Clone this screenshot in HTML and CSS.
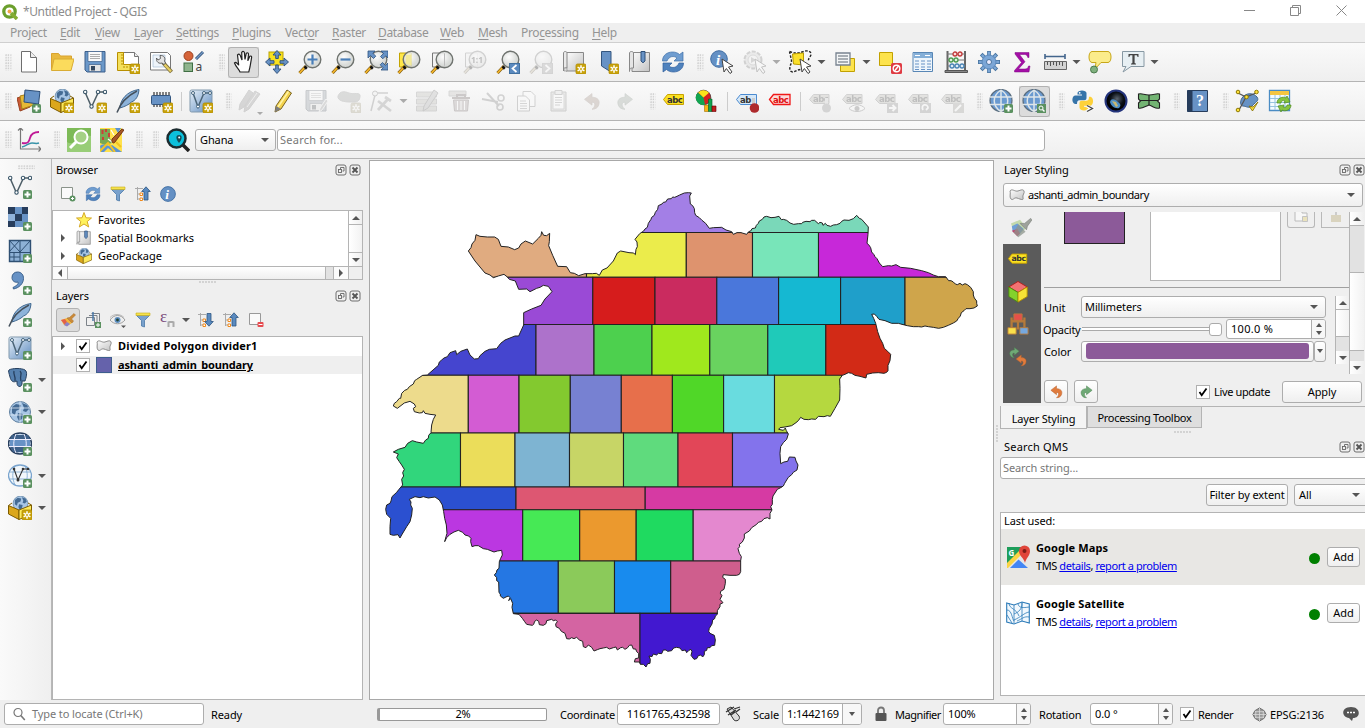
FILE: index.html
```html
<!DOCTYPE html>
<html lang="en">
<head>
<meta charset="utf-8">
<title>*Untitled Project - QGIS</title>
<link rel="stylesheet" href="styles.css">
</head>
<body>
<svg class="defs" aria-hidden="true">
<defs>
<linearGradient id="blueG" x1="0" y1="0" x2="1" y2="1"><stop offset="0" stop-color="#e8f1f9"/><stop offset="1" stop-color="#5f8cc0"/></linearGradient>
<linearGradient id="grayG" x1="0" y1="0" x2="1" y2="1"><stop offset="0" stop-color="#fdfdfd"/><stop offset="1" stop-color="#c3c3c3"/></linearGradient>
<radialGradient id="lensG" cx=".4" cy=".35"><stop offset="0" stop-color="#fff"/><stop offset="1" stop-color="#d3d6d3"/></radialGradient>
<radialGradient id="earthG" cx=".55" cy=".4"><stop offset="0" stop-color="#5b6570"/><stop offset=".6" stop-color="#0b1017"/><stop offset="1" stop-color="#000"/></radialGradient>

<symbol id="b-star" viewBox="0 0 24 24"><rect x="14" y="14" width="10" height="10" rx="1.500" fill="#c9a30a" stroke="#b08a00" stroke-width=".8"/><path d="M19 15.200v7.600M15.600 17.100l6.800 3.800M22.400 17.100l-6.800 3.800" stroke="#fff" stroke-width="1.500"/><circle cx="19" cy="19" r="1" fill="#c9a30a"/></symbol>
<symbol id="b-plus" viewBox="0 0 24 24"><rect x="15" y="15" width="9" height="9" rx="1.500" fill="#5b9160"/><path d="M19.500 16.500v6M16.500 19.500h6" stroke="#fff" stroke-width="2"/></symbol>
<symbol id="lens" viewBox="0 0 24 24"><path d="M1.500 23l6.500-7" stroke="#7c5a10" stroke-width="3"/><path d="M1.500 23l5.200-5.600" stroke="#f4b52a" stroke-width="1.800"/><path d="M6.500 16.500l2.300 2.200" stroke="#111" stroke-width="2.600"/><circle cx="14.500" cy="9.500" r="8.300" fill="url(#lensG)" fill-opacity=".85" stroke="#6f736f" stroke-width="1.400"/></symbol>

<symbol id="new" viewBox="0 0 24 24"><path d="M4.500 1.500h9l6 6v14.500h-15z" fill="#fff" stroke="#6e6e6e"/><path d="M13.500 1.500v6h6" fill="#eee" stroke="#6e6e6e"/></symbol>
<symbol id="open" viewBox="0 0 24 24"><path d="M1.500 20V3.500h7l2 2.500h11v3" fill="#e9b93e" stroke="#d9a32f"/><path d="M1.500 20.500L4 9h20l-3 11.500z" fill="#fbdb5c" stroke="#d9ac34"/></symbol>
<symbol id="save" viewBox="0 0 24 24"><path d="M2 1.500h20v20.500H4l-2-2z" fill="#6b98c9" stroke="#3c5f8a"/><path d="M5 1.500h14v10H5z" fill="#fafafa" stroke="#3c5f8a" stroke-width=".7"/><path d="M7 4.500h10M7 6.500h10M7 8.500h10" stroke="#999" stroke-width=".8"/><path d="M6 14.500h12v7H6z" fill="#e4e4e4" stroke="#3c5f8a" stroke-width=".7"/><path d="M8 16h4v4.500H8z" fill="#33475e"/></symbol>
<symbol id="layout" viewBox="0 0 24 24"><path d="M4.500 2.500h14l4 4v14h-18z" fill="#fff" stroke="#777"/><path d="M1.500 2.500h6v12h10v6h-16z" fill="#f4e05c" stroke="#b88f00"/><path d="M5 5h2M5 8h2M5 11h2M5 14h2M8 16v2M11 16v2" stroke="#b88f00"/><path d="M18.500 2.500v4h4" fill="#eee" stroke="#777"/><use href="#b-star"/></symbol>
<symbol id="layoutmgr" viewBox="0 0 24 24"><path d="M1.500 2.500h17l3 3v14.500h-20z" fill="#fff" stroke="#777"/><path d="M4 5h12v12H4z" fill="#eef4fa" stroke="#9bb6d2" stroke-width=".6"/><path d="M14 12.500l8.500 9.500" stroke="#7d7040" stroke-width="4"/><path d="M15.500 14.500l6.500 7" stroke="#e7cf63" stroke-width="2.200"/><path d="M11 5.500l.5 3-2.500 1.500L7.500 8c-.5 4 2.500 6 5.500 5l2 1.500 1.500-1.500-1-2c1.500-3-1-6-4.500-5.500z" fill="#e4e4e4" stroke="#555" stroke-width=".9"/></symbol>
<symbol id="style" viewBox="0 0 24 24"><circle cx="6.500" cy="6" r="4.500" fill="#d5643a" stroke="#9e401e"/><path d="M21 2l-7 7" stroke="#34547b" stroke-width="3"/><path d="M21 2l-7 7" stroke="#7299c6" stroke-width="1.300"/><rect x="2" y="13" width="8.500" height="8.500" fill="#8fb48d" stroke="#3f6e43"/><text x="13.500" y="21" class="i-a">a</text></symbol>
<symbol id="hand" viewBox="0 0 24 24"><path d="M8 22c-1-3-4-5-5.500-9 1.500-1.500 3 .5 4.200 2.200L5.500 5c1.500-1.600 2.400-.6 2.900.8L10 10 9.700 2.300c1.400-1.500 2.400-.7 2.700.4L13 9.500l1.300-6.300c1.400-1 2.200-.1 2.200 1l-.7 6.600 2-4.600c1.300-.6 2 .2 1.800 1.500L18 17l-1.200 5z" fill="#fff" stroke="#222" stroke-width="1.200"/></symbol>
<symbol id="pansel" viewBox="0 0 24 24"><rect x="4" y="2" width="14" height="13" fill="#f9e21e" stroke="#b9a100"/><path d="M12 .5l4 4.500h-2.700v3.500h-2.600V5H8zM12 23.500l-4-4.500h2.700v-4h2.600v4H16zM.5 12L5 8v2.700h4v2.600H5V16zM23.500 12L19 8v2.700h-4v2.600h4V16z" fill="#6792c5" stroke="#2d4f78" stroke-width=".9"/></symbol>
<symbol id="zoomin" viewBox="0 0 24 24"><use href="#lens"/><path d="M14.500 4.500v10M9.500 9.500h10" stroke="#4a7fb8" stroke-width="2.200"/></symbol>
<symbol id="zoomout" viewBox="0 0 24 24"><use href="#lens"/><path d="M9.500 9.500h10" stroke="#4a7fb8" stroke-width="2.200"/></symbol>
<symbol id="zoomfull" viewBox="0 0 24 24"><use href="#lens"/><path d="M4 1h7L8.800 3.200l3 3-2.300 2.300-3-3L4 8zM24 1v7l-2.200-2.200-3 3-2.300-2.300 3-3L17 1zM24 20h-7l2.200-2.200-3-3 2.300-2.300 3 3L24 13z" fill="#6792c5" stroke="#2f5380" stroke-width=".8"/></symbol>
<symbol id="zoomsel" viewBox="0 0 24 24"><path d="M2.500 3h12v14h-12z" fill="#ffe748" stroke="#c4a500"/><use href="#lens"/><path d="M9 5c2 0 4-.5 5.500-.5v11L9 14z" fill="#f2ea9a"/></symbol>
<symbol id="zoomlayer" viewBox="0 0 24 24"><path d="M2.500 3h12v14h-12z" fill="#f2f2f2" stroke="#777"/><use href="#lens"/><path d="M14.500 3.500v12" stroke="#bbb"/></symbol>
<symbol id="zoomnative" viewBox="0 0 24 24"><path d="M2.500 3h12v14h-12z" fill="#f2f2f2" stroke="#777"/><use href="#lens"/><text x="8" y="13" class="i-11">1:1</text></symbol>
<symbol id="zoomlast" viewBox="0 0 24 24"><use href="#lens"/><rect x="13.500" y="13.500" width="10" height="10" fill="#5b8abf" stroke="#41709f"/><path d="M20.500 15l-4 3.500 4 3.500" fill="none" stroke="#fff" stroke-width="1.700"/></symbol>
<symbol id="zoomnext" viewBox="0 0 24 24"><use href="#lens"/><rect x="13.500" y="13.500" width="10" height="10" fill="#999" stroke="#888"/><path d="M16.500 15l4 3.500-4 3.500" fill="none" stroke="#fff" stroke-width="1.700"/></symbol>
<symbol id="mapview" viewBox="0 0 24 24"><path d="M4 2.500h17.500V21H4z" fill="url(#grayG)" stroke="#888"/><path d="M1.500 3c0-2 3.500-2 3.500 0v15H3c-1 0-1.500 1-1.500 3z" fill="#e9e9e9" stroke="#888"/><path d="M2 18h3v3H2z" fill="#ddd" stroke="#888" stroke-width=".6"/><use href="#b-star"/></symbol>
<symbol id="bookmark" viewBox="0 0 24 24"><path d="M6.500 1.500h9.500V22l-9.500-6z" fill="#6792c5" stroke="#34567f"/><use href="#b-star"/></symbol>
<symbol id="bookmarks" viewBox="0 0 24 24"><path d="M4 2.500h17.500V21.500H4z" fill="url(#grayG)" stroke="#888"/><path d="M1.500 3c0-2 4-2 4 0v15H3.500c-1 0-2 1-2 3.500z" fill="#e5e5e5" stroke="#888"/><path d="M13 1.500h4V11l-2 1.800L13 11z" fill="#6792c5" stroke="#2d4f78"/></symbol>
<symbol id="refresh" viewBox="0 0 24 24"><path d="M1.500 11c0-6 5-9 10-9 3 0 5.500 1 7 2.500L22 2v9h-9l3-3c-3-2.500-8-2-10 3z" fill="#6f9dd0" stroke="#3e6ea8" stroke-width=".7"/><path d="M22.500 13c0 6-5 9-10 9-3 0-5.500-1-7-2.500L2 22v-9h9l-3 3c3 2.500 8 2 10-3z" fill="#4f82bd" stroke="#2f5f9c" stroke-width=".7"/></symbol>
<symbol id="cursor" viewBox="0 0 24 24"><path d="M12 9l11 7-4.500 1 3.500 5-2 1.500-3.600-5-2.400 3.500z" fill="#fff" stroke="#444" stroke-width="1"/></symbol>
<symbol id="info" viewBox="0 0 24 24"><circle cx="9" cy="9" r="8.300" fill="#6490c4" stroke="#3f6da3"/><text x="6" y="14.500" class="i-i">i</text></symbol>
<symbol id="identify" viewBox="0 0 24 24"><use href="#info"/><use href="#cursor"/></symbol>
<symbol id="action" viewBox="0 0 24 24"><circle cx="10" cy="10" r="8.500" fill="#ccc" stroke="#777" stroke-width="2" stroke-dasharray="4 1.500"/><circle cx="10" cy="10" r="5" fill="#eee" stroke="#999"/><path d="M8 7l5 3-5 3z" fill="#888"/><use href="#cursor"/></symbol>
<symbol id="select" viewBox="0 0 24 24"><path d="M1.500 1.500c5 2 8 2 14 0 4-1.500 8 0 7.500 3s-3 3-2.500 7M1.500 1.500l2 9c0 4-3 7-1 10.500 3 3 6-2 11-1.500" fill="none" stroke="#222" stroke-width="1.400" stroke-dasharray="2.500 1.500"/><path d="M4.500 4l11-1v12l-10-1z" fill="#fbe02a" stroke="#b99a00"/><use href="#cursor"/></symbol>
<symbol id="selval" viewBox="0 0 24 24"><path d="M7.500 8.500h14v13h-14z" fill="#fde34d" stroke="#c2a100"/><path d="M3 3h14v12H3z" fill="#f4f6f7" stroke="#788390" stroke-width="1.300"/><path d="M5 6h10M5 9h10M5 12h10" stroke="#8e979f" stroke-width="1.300"/></symbol>
<symbol id="desel" viewBox="0 0 24 24"><path d="M1.500 2.500h13v13h-13z" fill="#fde34d" stroke="#c2a100"/><rect x="13" y="13" width="11" height="11" rx="1.500" fill="#df3b43"/><circle cx="18.500" cy="18.500" r="3.300" fill="none" stroke="#fff" stroke-width="1.400"/><path d="M16.500 21l4-5" stroke="#fff" stroke-width="1.400"/></symbol>
<symbol id="table" viewBox="0 0 24 24"><path d="M2 2.500h19.500v19H2z" fill="#eef5fb" stroke="#5886b5"/><path d="M2.500 3h18.500v5H2.500z" fill="#84afd8"/><path d="M4 5.500h5M14 5.500h5" stroke="#fff"/><path d="M4 11h4M10 11h4M16 11h4M4 14h4M10 14h4M16 14h4M4 17h4M10 17h4M16 17h4M4 19.500h4M10 19.500h4M16 19.500h4" stroke="#6792c5"/></symbol>
<symbol id="abacus" viewBox="0 0 24 24"><path d="M3.500 1v19M21 1v19" stroke="#666" stroke-width="2"/><path d="M1 20.500h22.500v2H1z" fill="#888" stroke="#555"/><path d="M3 4h18M3 10h18M3 16h18" stroke="#777"/><g stroke-width="1.300"><g fill="#f9dcdc" stroke="#c23b3b"><circle cx="11" cy="4" r="2"/><circle cx="16" cy="4" r="2"/></g><g fill="#def1de" stroke="#4c9a50"><circle cx="7" cy="10" r="2"/><circle cx="12" cy="10" r="2"/></g><g fill="#deebf5" stroke="#4a84b5"><circle cx="8" cy="16" r="2"/><circle cx="13" cy="16" r="2"/><circle cx="18" cy="16" r="2"/></g></g></symbol>
<symbol id="gear" viewBox="0 0 24 24"><path d="M12 1v22M1 12h22M4.200 4.200l15.600 15.600M19.800 4.200L4.200 19.800" stroke="#48749f" stroke-width="3.800"/><path d="M12 1.800v20.400M1.800 12h20.400M4.800 4.800l14.400 14.400M19.200 4.800L4.800 19.200" stroke="#7ba6d6" stroke-width="2.400"/><circle cx="12" cy="12" r="7" fill="#7ba6d6" stroke="#5c89bb"/><circle cx="12" cy="12" r="2.500" fill="#eef" stroke="#48749f"/></symbol>
<symbol id="sigma" viewBox="0 0 24 24"><path d="M5 2.500h14v5h-1.200c-.5-2-1.500-3-3-3H9.500l5.500 7.300-6.500 7.200H15c2 0 3-.8 3.500-3H20l-1 6H4.500v-1.500l7-8L5 4z" fill="#a40ea6" stroke="#7d0880" stroke-width=".5"/></symbol>
<symbol id="measure" viewBox="0 0 24 24"><path d="M2 6.500h20M2 4v5M22 4v5" stroke="#43658c" stroke-width="1.600"/><path d="M1.500 11.500h22v8h-22z" fill="#d3d3d3" stroke="#666"/><path d="M4.500 12v3M7.500 12v4M10.500 12v3M13.500 12v4M16.500 12v3M19.500 12v4" stroke="#555"/></symbol>
<symbol id="tips" viewBox="0 0 24 24"><path d="M4 1.500h16c4 0 4 11 0 11h-7L7 19l1-6.500H4c-4 0-4-11 0-11z" fill="#fbec8b" stroke="#c8a718"/><circle cx="6" cy="19.500" r="3.500" fill="#7fb07e" stroke="#4b7a4c"/></symbol>
<symbol id="textann" viewBox="0 0 24 24"><path d="M1.500 1.500h21.500v15H10L2 22l3-5.500H1.500z" fill="#e7eff3" stroke="#8798a3"/><path d="M7.500 4h10v3h-1c0-1.300-.5-1.700-2-1.700h-.9V12.500c0 .8.500 1 1.400 1v1h-5v-1c1 0 1.400-.2 1.400-1V5.300h-.9C9 5.300 8.500 5.700 8.500 7h-1z" fill="#444"/></symbol>

<symbol id="dsm" viewBox="0 0 24 24"><path d="M0 9l11-3 2 12-10 4z" fill="#cc5a35" stroke="#99401f"/><path d="M3 7l12-3 2 12-12 4z" fill="#e6b836" stroke="#a88116"/><path d="M8 1l15 1.500L21.500 15 7 13z" fill="#6792c5" stroke="#2d4f78"/><use href="#b-plus"/></symbol>
<symbol id="globe" viewBox="0 0 24 24"><circle cx="12" cy="12" r="10.500" fill="#a8c6e5" stroke="#5e7f9f"/><path d="M4 7l4-3 5 1-1 4-4 2-1 4-3-2zM14 3l5 2 2 4-3 3-3-1 1-3zM10 13l5 1-1 5-3 2-2-4z" fill="#446b94"/></symbol>
<symbol id="gpkg" viewBox="0 0 24 24"><svg x="4" y="-1" width="17" height="17" viewBox="0 0 24 24"><use href="#globe"/></svg><path d="M.5 9.500L11 14v9.500L.5 18z" fill="#dba71c" stroke="#7d5c00"/><path d="M11 14l12.500-5v9L11 23.500z" fill="#fce95c" stroke="#7d5c00"/><path d="M.5 9.500L4 7M23.500 9L20 7" stroke="#7d5c00"/></symbol>
<symbol id="newgpkg" viewBox="0 0 24 24"><use href="#gpkg"/><use href="#b-star"/></symbol>
<symbol id="vee" viewBox="0 0 24 24"><path d="M2 3l6.500 15 7-15h6" fill="none" stroke="#4d5d66" stroke-width="1.500"/><g fill="#fff" stroke="#3c586b" stroke-width="1.100"><circle cx="2.200" cy="3" r="1.700"/><circle cx="8.500" cy="17.500" r="1.700"/><circle cx="15" cy="3" r="1.700"/><circle cx="22" cy="3" r="1.700"/></g></symbol>
<symbol id="newshp" viewBox="0 0 24 24"><use href="#vee"/><use href="#b-star"/></symbol>
<symbol id="feather" viewBox="0 0 24 24"><path d="M4 19C4 11 11 2 23 .5c-.5 7-3.500 11-7.500 12.500-3 3-7 4.500-11.500 6z" fill="#8db3da" stroke="#3f678f"/><path d="M1 23.500C4 15 11 7 21 2" fill="none" stroke="#44505c" stroke-width="1.500"/></symbol>
<symbol id="newlite" viewBox="0 0 24 24"><use href="#feather"/><use href="#b-star"/></symbol>
<symbol id="mem" viewBox="0 0 24 24"><path d="M5 3v15M8 3v15M11 3v15M14 3v15M17 3v15M20 3v15" stroke="#333" stroke-width="1.200"/><rect x="2.500" y="6.500" width="19" height="9" rx="1" fill="#6792c5" stroke="#34567f"/><use href="#b-star"/></symbol>
<symbol id="virt" viewBox="0 0 24 24"><rect x="1" y="1" width="22" height="22" rx="1.500" fill="url(#blueG)" stroke="#8199ad"/><path d="M4 4l5 14L15 4h5" fill="none" stroke="#4c6578" stroke-width="1.500"/><g fill="#fff" stroke="#45667f"><circle cx="4" cy="4" r="1.500"/><circle cx="9" cy="17.500" r="1.500"/><circle cx="15" cy="4" r="1.500"/><circle cx="21" cy="4" r="1.500"/></g></symbol>
<symbol id="newvirt" viewBox="0 0 24 24"><use href="#virt"/><use href="#b-star"/></symbol>
<symbol id="addvirt" viewBox="0 0 24 24"><use href="#virt"/><use href="#b-plus"/></symbol>
<symbol id="pencil" viewBox="0 0 24 24"><path d="M4 23l1-6L16 1l4.500 3L10 20z" fill="#f3d24c" stroke="#7b6420"/><path d="M7 18L17.500 2.500" stroke="#fff3a5" stroke-width="1.500"/><path d="M4 23l1-6 5 3z" fill="#7d7d7d"/></symbol>
<symbol id="pencils" viewBox="0 0 24 24"><path d="M1 21l1-6L11 1l4 3-9 14zM6 23l1-6L17 2l5 3-11 15z" fill="#8f8987" stroke="#777"/><path d="M9 18L19 4" stroke="#ddd"/></symbol>
<symbol id="savee" viewBox="0 0 24 24"><use href="#save"/><path d="M15 23l1-4 6-9 2 2-6 9z" fill="#999" stroke="#eee"/></symbol>
<symbol id="digit" viewBox="0 0 24 24"><path d="M1 7c2-5 6-5 11-3s12-2 11 4-5 5-10 5S0 12 1 7z" fill="#8c9c8a" stroke="#888"/><use href="#b-star"/></symbol>
<symbol id="vertex" viewBox="0 0 24 24"><path d="M1 22L5 6M5 4h13" stroke="#777" stroke-width="1.500"/><circle cx="5" cy="4.500" r="2.500" fill="#eee" stroke="#666"/><path d="M8 21L18 10M8 12l13 10M15 8l6 4" stroke="#888" stroke-width="2.800"/></symbol>
<symbol id="multi" viewBox="0 0 24 24"><path d="M1.500 3h20v5h-20zM1.500 10h20v5h-20zM1.500 17h20v5h-20z" fill="#bbb591" stroke="#888"/><path d="M8 22l1-5L19 1l4 3-10 15z" fill="#aaa" stroke="#666"/></symbol>
<symbol id="trash" viewBox="0 0 24 24"><path d="M1 2h17v5H1z" fill="#c4b99d" stroke="#888"/><path d="M4 9h18M9 8V6h8v2" stroke="#86504a" stroke-width="2" fill="none"/><path d="M5.500 11h15l-1 11h-13z" fill="#bb8f8c" stroke="#86504a"/><path d="M9.500 12v9M13 12v9M16.500 12v9" stroke="#fff"/></symbol>
<symbol id="cut" viewBox="0 0 24 24"><path d="M1 10l16 3M6 4l12 13" stroke="#777" stroke-width="2"/><circle cx="20" cy="9" r="3" fill="none" stroke="#777" stroke-width="1.600"/><circle cx="19" cy="18" r="3" fill="none" stroke="#777" stroke-width="1.600"/></symbol>
<symbol id="copy" viewBox="0 0 24 24"><path d="M9 2.500h8l4 4v11H9z" fill="#fff" stroke="#777"/><path d="M3.500 7h8l4 4v11h-12z" fill="#fff" stroke="#777"/><path d="M6 12h6M6 14.500h7M6 17h7M6 19.500h7" stroke="#888"/></symbol>
<symbol id="paste" viewBox="0 0 24 24"><path d="M4 3h15v19H4z" fill="#c9c9bd" stroke="#777"/><path d="M6 5h11v15H6z" fill="#fff" stroke="#999"/><path d="M8 1.500h7v4H8z" fill="#ddd" stroke="#777"/><path d="M8 8.500h7M8 11h7M8 13.500h7M8 16h5" stroke="#888"/></symbol>
<symbol id="undo" viewBox="0 0 24 24"><path d="M3 10l9-7v4.500c7 0 10 4 8 9.500-1 3-4 5-8 5 5-4 4-9 0-8.500V17z" fill="#e07b3d" stroke="#b9622d" stroke-width=".8"/></symbol>
<symbol id="redo" viewBox="0 0 24 24"><path d="M21 10l-9-7v4.500c-7 0-10 4-8 9.500 1 3 4 5 8 5-5-4-4-9 0-8.500V17z" fill="#6fa976" stroke="#4c8453" stroke-width=".8"/></symbol>
<symbol id="label" viewBox="0 0 24 24"><path d="M1.500 10.500l4-5h16v10h-16z" fill="#fbe122" stroke="#c7a100"/><text x="5" y="13.500" class="i-abc">abc</text></symbol>
<symbol id="labelb" viewBox="0 0 24 24"><path d="M1.500 10.500l4-5h16v10h-16z" fill="#d4e7f8" stroke="#4a8ad0"/><text x="5" y="13.500" class="i-abc">ab</text><path d="M18.500 9v9" stroke="#ccc" stroke-width="3"/><circle cx="19.500" cy="19" r="4.800" fill="#ae2a2d"/></symbol>
<symbol id="labelr" viewBox="0 0 24 24"><path d="M1.500 10.500l4-5h16.500v10h-16.500z" fill="#fbdada" stroke="#f01818" stroke-width="1.300"/><text x="5" y="13.500" class="i-abc i-red">abc</text></symbol>
<symbol id="labelg" viewBox="0 0 24 24"><path d="M1.500 10.500l4-5h15.500v9h-15.500z" fill="#b8b48e" stroke="#777"/><text x="5" y="13" class="i-abc">abc</text></symbol>
<symbol id="l-pin" viewBox="0 0 24 24"><use href="#labelg"/><path d="M18.500 9v8" stroke="#ccc" stroke-width="3"/><circle cx="18.500" cy="19" r="4.500" fill="#888"/></symbol>
<symbol id="l-eye" viewBox="0 0 24 24"><use href="#labelg"/><path d="M8 19.500c4-5 12-5 16 0-4 4-12 4-16 0z" fill="#fff" stroke="#666"/><circle cx="16" cy="19.500" r="2.500" fill="#666"/></symbol>
<symbol id="l-move" viewBox="0 0 24 24"><use href="#labelg"/><rect x="13" y="14" width="11" height="10" fill="#888"/><path d="M15 19h6M18.500 16l3 3-3 3" stroke="#fff" stroke-width="2" fill="none"/></symbol>
<symbol id="l-rot" viewBox="0 0 24 24"><use href="#labelg"/><rect x="13" y="14" width="11" height="10" fill="#888"/><path d="M16 21c-3-6 5-7 5-2l-2 2" stroke="#fff" stroke-width="1.800" fill="none"/></symbol>
<symbol id="l-edit" viewBox="0 0 24 24"><use href="#labelg"/><rect x="13" y="14" width="11" height="10" fill="#9b977c"/><path d="M15 22l6-6" stroke="#fff" stroke-width="2.200"/></symbol>
<symbol id="diag" viewBox="0 0 24 24"><circle cx="8.500" cy="8.500" r="7.300" fill="#d81f1f" stroke="#333" stroke-width=".7"/><path d="M8.500 8.500L3 3.500A7.300 7.300 0 0 0 10 15.700z" fill="#12a551"/><path d="M8.500 8.500L3.200 3.500A7.300 7.300 0 0 1 14 3.700z" fill="#fce21a"/><path d="M9.500 16h4v6.500h-4z" fill="#f9b516" stroke="#a07000" stroke-width=".6"/><path d="M13.500 10h3.500v12.500h-3.500z" fill="#12a551" stroke="#045a26" stroke-width=".6"/><path d="M17 17h4v5.500h-4z" fill="#c01f1f" stroke="#600" stroke-width=".6"/></symbol>
<symbol id="wglobe" viewBox="0 0 24 24"><circle cx="12" cy="11.500" r="11" fill="#6a9ad0" stroke="#5c6f80" stroke-width="1.200"/><path d="M1 8h22M1 15.500h22M12 1v21.500M12 1C3 7 3 17 12 22.500M12 1c9 6 9 16 0 21.500" stroke="#dfe6e9" stroke-width="1.500" fill="none"/></symbol>
<symbol id="wadd" viewBox="0 0 24 24"><use href="#wglobe"/><use href="#b-plus"/></symbol>
<symbol id="wsearch" viewBox="0 0 24 24"><use href="#wglobe"/><rect x="15" y="15" width="9" height="9" fill="#5b9160"/><circle cx="19" cy="19" r="2" fill="none" stroke="#fff"/><path d="M20.500 20.500l2 2" stroke="#fff" stroke-width="1.500"/></symbol>
<symbol id="python" viewBox="0 0 24 24"><path d="M6.500 4c0-3.500 9-3.500 9 0v5c0 1.500-1 2.200-2.200 2.200H8.500C6.500 11.200 6 12.500 6 15H4c-4-1.500-3-8.500.5-8.500H11V5.500H6.500z" fill="#3674a9"/><circle cx="8.700" cy="3.800" r=".9" fill="#fff"/><path d="M17.500 18.500c0 4-9 4-9 0V14c0-1.500 1-2.300 2.300-2.300H15c2 0 3-1 3-4h1.500c4 1.500 3 9-.5 9h-6v1z" fill="#fdd13a"/><path d="M16 17l5 2.500-5 2.500" fill="none" stroke="#fff" stroke-width="3"/><path d="M16 16.500l5.500 3-5.500 3" fill="none" stroke="#444" stroke-width="1.300"/></symbol>
<symbol id="earth" viewBox="0 0 24 24"><circle cx="12" cy="12" r="10.500" fill="url(#earthG)" stroke="#24347c" stroke-width="2"/><path d="M6 13c1-4 5-3 8 0 3 2 3 4 1 6-4 1-8-2-9-6z" fill="#4d8ec4"/><path d="M8 12l4 1 2 4-2 1z" fill="#c7b873"/></symbol>
<symbol id="greenmap" viewBox="0 0 24 24"><path d="M1.500 5c4-1 5 1 10.500 1s7-2 10.500-1v5l-2 2 2 2v5c-4 1-5-1-10.500-3-5 2-7 4-10.500 3v-5l2-2-2-2z" fill="#73b473" stroke="#222" stroke-width="1.100"/><path d="M12 6v10M3 11.500h18" stroke="#222" stroke-width="1.200"/></symbol>
<symbol id="help" viewBox="0 0 24 24"><path d="M1.500 1.500h20v21h-20z" fill="#6792c5" stroke="#273d5c"/><path d="M1.500 1.500h5v21h-5z" fill="#273d5c"/><text x="10" y="17" class="i-q">?</text></symbol>
<symbol id="polyc" viewBox="0 0 24 24"><path d="M7 9c4-6 12-5 15-1s-3 6-5 9c-3 3-6 0-9 0s-3-5-1-8z" fill="#6792c5" stroke="#41668f"/><path d="M3 4l8 4 10-4M11 8L4 21" stroke="#555" fill="none" stroke-width="1.300"/><g fill="#ffe13c" stroke="#8f7b00"><circle cx="3" cy="3" r="1.800"/><circle cx="21.500" cy="3" r="1.800"/><circle cx="11.500" cy="8" r="1.800"/><circle cx="3" cy="21" r="1.800"/></g><path d="M14 17l3.500 5 5.500-9-5 5z" fill="#f7d93b" stroke="#826c00" stroke-width=".8"/></symbol>
<symbol id="tabref" viewBox="0 0 24 24"><path d="M1.500 1.500h20v20h-20z" fill="#f4fbff" stroke="#4b8cc4" stroke-width="1.300"/><path d="M2 2h19v4H2z" fill="#f5c542"/><path d="M2 9.500h19M2 13.500h19M2 17.500h19M7 6v15M12 6v15M17 6v15" stroke="#98c3df"/><path d="M9 14c0-5 6-7 9-5l1-2 3 6-6 1 1-2c-2-1-4 0-4 2zM23 16c0 5-6 7-9 5l-1 2-3-6 6-1-1 2c2 1 4 0 4-2z" fill="#86c440" stroke="#4e8a1b" stroke-width=".7"/></symbol>

<symbol id="chart" viewBox="0 0 24 24"><path d="M3.500 0v21H24M1 2.500l2.500-2.500L6 2.500M21.500 18.500L24 21l-2.500 2.500" stroke="#777" fill="none" stroke-width="1.200"/><path d="M5 15c6 1 7-1 8-5s4-6 9-6" stroke="#c01a96" stroke-width="1.800" fill="none"/><path d="M5 19c5-1 6-4 10-4 3 0 4 1 7 0" stroke="#3893a9" stroke-width="1.500" fill="none"/></symbol>
<symbol id="qms" viewBox="0 0 24 24"><path d="M0 0h24v24H0z" fill="#7dba57"/><path d="M0 14c8 5 14-8 24-6v16H0z" fill="#98cd77"/><circle cx="14" cy="9" r="6.500" fill="#a4d184" stroke="#fff" stroke-width="2"/><path d="M9.500 13.500L3 20" stroke="#fff" stroke-width="3"/></symbol>
<symbol id="osm" viewBox="0 0 24 24"><path d="M0 0h22v24H0z" fill="#ffe14c"/><path d="M0 1h10v9l2 5-7 2-5-2z" fill="#79a954"/><path d="M2.500 2v4M6 1v3M9 5v4M3 9v3" stroke="#cd3e39" stroke-width="2"/><path d="M11 2l3 5M8 11l4 3" stroke="#fff" stroke-width="1.200"/><path d="M15 0h6l-3 5zM0 18c4-4 8 2 12-1l10 7h-9l-5-4-4 4H1z" fill="#5b94d5"/><path d="M0 23L8 15l7 9M16 14l5 5" stroke="#f2c323" stroke-width="2" fill="none"/><path d="M12 11L22 1l2 1-9 12c-1 2-4 1-3-3z" fill="#a75728" stroke="#5e2508" stroke-width=".8"/></symbol>
<symbol id="searchpin" viewBox="0 0 24 24"><path d="M17 17l6 6" stroke="#222" stroke-width="3.500"/><circle cx="10.500" cy="10.500" r="9" fill="#0cc0dc" stroke="#1c2b2f" stroke-width="2.500"/><path d="M13 15c-4-5-3-8 0-8s4 3 0 8z" fill="#164a55"/><circle cx="13.200" cy="9.500" r="1" fill="#fff"/></symbol>

<symbol id="addvec" viewBox="0 0 24 24"><use href="#vee"/><use href="#b-plus"/></symbol>
<symbol id="addras" viewBox="0 0 24 24"><path d="M0 0h20v20H0z" fill="#6792c5"/><path d="M0 0h7v7H0zM14 0h6v7h-6zM7 7h7v7H7zM0 14h7v6H0z" fill="#273d5c"/><path d="M0 7h7v7H0z" fill="#8fb2da"/><use href="#b-plus"/></symbol>
<symbol id="addmesh" viewBox="0 0 24 24"><path d="M1.500 1.500h21v21h-21z" fill="#8db1d6" stroke="#2f5073" stroke-width="1.400"/><path d="M1 13.500h22M12 1v22M1 1l11 12M12 1L1 13M22 2L12 13M6 13v10M12 18H2" stroke="#2f5073" fill="none"/><use href="#b-plus"/></symbol>
<symbol id="adddelim" viewBox="0 0 24 24"><path d="M5 16.500c4-2 6-4 5-5.500-3 1-6-1-6-4.500C4 3 6.500 1 9.500 1c4 0 6 3 6 6.500 0 5-4.500 9.500-10 10.500z" fill="#6792c5" stroke="#3b618d"/><use href="#b-plus"/></symbol>
<symbol id="addlite" viewBox="0 0 24 24"><use href="#feather"/><use href="#b-plus"/></symbol>
<symbol id="addpg" viewBox="0 0 24 24"><path d="M1 2c3-2 13-2 16 0s1 8 0 11h-3v3c-1 4-5 3-5-1v-2c-4 2-6 0-7-4S0 3 1 2z" fill="#5580ae" stroke="#263f5e"/><path d="M6 3c-1 4 2 5 1 10M12 3c3 3-1 5 1 10" stroke="#263f5e" stroke-width="1.300" fill="none"/><use href="#b-plus"/></symbol>
<symbol id="addwms" viewBox="0 0 24 24"><use href="#globe"/><path d="M2 8h20M2 15h20M12 1v22" stroke="#dfeaf5" stroke-width=".8"/><use href="#b-plus"/></symbol>
<symbol id="addxyz" viewBox="0 0 24 24"><ellipse cx="12" cy="11.500" rx="11.500" ry="10.500" fill="#c7dbf0" stroke="#273d5c" stroke-width="1.500"/><path d="M2 8h20v6H2z" fill="#6792c5"/><path d="M4 3h16l2 4H2zM2 15h20l-3 5H5z" fill="#3d5f88"/><path d="M8 2c-3 7-3 13 0 19M16 2c3 7 3 13 0 19M1 7.500h22M1 14.500h22" stroke="#eef" fill="none"/><use href="#b-plus"/></symbol>
<symbol id="addwfs" viewBox="0 0 24 24"><ellipse cx="12" cy="11.500" rx="11.500" ry="10.500" fill="#f2f7fb" stroke="#7aa4ce" stroke-width="1.300"/><path d="M1 8h22M1 15h22M7 2c-3 7-3 12 0 19M17 2c3 7 3 12 0 19" stroke="#7aa4ce" fill="none" stroke-width=".8"/><path d="M6 5l4 11 5-11h5" stroke="#333" fill="none" stroke-width="1.100"/><g fill="#333"><circle cx="6" cy="5" r="1.300"/><circle cx="10" cy="16" r="1.500"/><circle cx="15" cy="5" r="1.300"/><circle cx="20" cy="5" r="1.300"/></g><use href="#b-plus"/></symbol>

<symbol id="s-add" viewBox="0 0 16 16"><path d="M1.500 1.500h11v11h-11z" fill="#fafafa" stroke="#8a938a"/><circle cx="12.500" cy="12.500" r="3" fill="#5b9160"/><path d="M12.500 11v3M11 12.500h3" stroke="#fff"/></symbol>
<symbol id="s-rem" viewBox="0 0 16 16"><path d="M1.500 1.500h11v11h-11z" fill="#fafafa" stroke="#999"/><rect x="9.500" y="10" width="6" height="5" rx="1" fill="#e64a4f"/><path d="M10.500 12.500h4" stroke="#fff"/></symbol>
<symbol id="s-filter" viewBox="0 0 16 16"><path d="M1.500 3.500h13L9.500 8.500V15l-3-1V8.500z" fill="#79a1cc" stroke="#4a78a8" stroke-width=".8"/><path d="M1 1h14v2.500H1z" fill="#f6e24c" stroke="#c8ac16" stroke-width=".6"/></symbol>
<symbol id="s-tree" viewBox="0 0 16 16"><path d="M2.500 1v13M0 2.500h8M2.500 8H6M2.500 13H6" stroke="#aaa"/><path d="M5 7h2.500v2.500H5zM5 12h2.500v2.500H5z" fill="#fff" stroke="#f08a1c"/></symbol>
<symbol id="s-up" viewBox="0 0 16 16"><use href="#s-tree"/><path d="M11 .8l4.300 4.700H13V14H9V5.500H6.700z" fill="#5a8abf" stroke="#2d5582" stroke-width=".8"/></symbol>
<symbol id="s-down" viewBox="0 0 16 16"><use href="#s-tree"/><path d="M11 14.200l4.300-4.700H13V1.500H9v8H6.700z" fill="#5a8abf" stroke="#2d5582" stroke-width=".8"/></symbol>
<symbol id="s-brush" viewBox="0 0 16 16"><path d="M1 8l6-2 5 5-5 3-3-1z" fill="#f2b63d"/><path d="M1 8l4-1 2 3-2 3z" fill="#e2604c"/><path d="M4 13l3-3 3 2-3 2.500z" fill="#8a82c8"/><path d="M7 6l5 5 1.500-2-2-2L15.500 3 14 1.500 9.500 5.500z" fill="#cb8a38" stroke="#a46a22" stroke-width=".5"/></symbol>
<symbol id="s-group" viewBox="0 0 16 16"><path d="M1.500 5.500h8v8h-8zM4 3.500h8v8M6.500 1.500h8v8" fill="none" stroke="#7c8289"/><path d="M8 0v9" stroke="#4a78a8" stroke-width="1.500"/><rect x="10" y="10" width="6" height="6" fill="#5b9160"/><path d="M13 11v4M11 13h4" stroke="#fff"/></symbol>
<symbol id="s-eye" viewBox="0 0 16 16"><path d="M0 8c4-6 11-6 15 0-4 5-11 5-15 0z" fill="#eee" stroke="#8a8a8a" stroke-width=".8"/><circle cx="7.500" cy="8" r="3" fill="#5f8fc2"/><circle cx="7.500" cy="8" r="1.400" fill="#243"/><path d="M0 5.500c4-4 10-4 14 0" fill="none" stroke="#aaa" stroke-width=".8"/><path d="M11 13.500h5l-2.500 2.500z" fill="#555"/></symbol>
<symbol id="s-eps" viewBox="0 0 16 16"><text x="0" y="10" class="i-eps">ε</text><path d="M8.500 9.500v5.500M13.500 9.500v5.500M8.500 10h5" fill="none" stroke="#aaa" stroke-width="2"/></symbol>
<symbol id="star" viewBox="0 0 16 16"><path d="M8 .5l2 5.300 5.500.2-4.300 3.500 1.500 5.500L8 12l-4.700 3 1.500-5.500L.5 6l5.500-.2z" fill="#fff25c" stroke="#d5a928"/></symbol>
<symbol id="poly" viewBox="0 0 16 16"><path d="M1 4c2-3 5 1 8 0s5-2 6 0-2 4-1 7-3 1-6 0-4 3-6 1 0-6-1-8z" fill="url(#grayG)" stroke="#8c8c8c"/></symbol>
<symbol id="brush" viewBox="0 0 24 24"><path d="M1 7l10-4 7 9-9 8-5-5z" fill="#c3d9ac"/><path d="M2 10l6-3 7 6-6 7-6-4z" fill="#6f9fd6"/><path d="M2 15l6-2 3 5-3 3z" fill="#c2456b"/><path d="M9 8l8 8-8 6-5-5z" fill="#8d968d" fill-opacity=".75"/><path d="M11 7l7 7 1-4 5-7-1.500-1.500L16 7z" fill="#9ea29c" stroke="#7b807b" stroke-width=".7"/></symbol>
<symbol id="cube" viewBox="0 0 24 24"><path d="M12 .5l10 6-10 6-10-6z" fill="#f27272" stroke="#b31b1b"/><path d="M2 6.500l10 6V23L2 17z" fill="#84d22c" stroke="#4a8a10"/><path d="M22 6.500l-10 6V23l10-6z" fill="#f6e336" stroke="#b29100"/></symbol>
<symbol id="brushes" viewBox="0 0 24 24"><path d="M12 6v12M5 5v11M19 5v11M5 9h14" stroke="#b57a3a" stroke-width="2.500"/><path d="M7.500 1h9v7h-9z" fill="#e5504a" stroke="#ba7a3d"/><path d="M1 16h9v7H1z" fill="#fae04b" stroke="#b57a3a"/><path d="M14 16h9v7h-9z" fill="#76a8de" stroke="#b57a3a"/></symbol>
<symbol id="history" viewBox="0 0 24 24"><svg x="1" y="1" width="14" height="14" viewBox="0 0 24 24"><use href="#redo"/></svg><svg x="8" y="9" width="15" height="15" viewBox="0 0 24 24"><use href="#undo"/></svg></symbol>
<symbol id="float" viewBox="0 0 12 12"><rect x="1" y="1" width="10" height="10" rx="2" fill="none" stroke="#6e6e6e"/><path d="M5.500 5V3.500h3.500V7H7.500" fill="none" stroke="#666" stroke-width=".9"/><rect x="3.500" y="5.500" width="3" height="3" fill="#efefef" stroke="#666" stroke-width=".9"/></symbol>
<symbol id="closep" viewBox="0 0 12 12"><rect x="1" y="1" width="10" height="10" rx="2" fill="none" stroke="#6e6e6e"/><path d="M3.500 3.500l5 5M8.500 3.500l-5 5" stroke="#555" stroke-width="1.900"/></symbol>
</defs>
</svg>

<div class="app">
<header class="title">
  <svg class="logo" viewBox="0 0 16 16"><circle cx="7.500" cy="7.500" r="5.700" fill="none" stroke="#6b9f2c" stroke-width="3.300"/><circle cx="7.500" cy="7.500" r="2" fill="#f0a445"/><path d="M9 9l6 6" stroke="#84ac31" stroke-width="3.500"/></svg>
  <span class="cap">*Untitled Project - QGIS</span>
  <div class="win">
    <svg viewBox="0 0 11 11"><path d="M0 5.500h11" stroke="#888"/></svg>
    <svg viewBox="0 0 11 11"><path d="M.5 2.500h8v8h-8zM2.500 2.500v-2h8v8h-2" fill="none" stroke="#888"/></svg>
    <svg viewBox="0 0 11 11"><path d="M.5.500l10 10M10.500.500l-10 10" stroke="#888"/></svg>
  </div>
</header>
<nav class="menu"><span>Pro<u>j</u>ect</span><span><u>E</u>dit</span><span><u>V</u>iew</span><span><u>L</u>ayer</span><span><u>S</u>ettings</span><span><u>P</u>lugins</span><span>Vect<u>o</u>r</span><span><u>R</u>aster</span><span><u>D</u>atabase</span><span><u>W</u>eb</span><span><u>M</u>esh</span><span>Pro<u>c</u>essing</span><span><u>H</u>elp</span></nav>

<div class="bar">
  <i class="grip first"></i>
  <b class="t"><svg><use href="#new"/></svg></b><b class="t"><svg><use href="#open"/></svg></b><b class="t"><svg><use href="#save"/></svg></b><b class="t"><svg><use href="#layout"/></svg></b><b class="t"><svg><use href="#layoutmgr"/></svg></b><b class="t"><svg><use href="#style"/></svg></b>
  <i class="grip"></i>
  <b class="t on"><svg><use href="#hand"/></svg></b><b class="t"><svg><use href="#pansel"/></svg></b><b class="t"><svg><use href="#zoomin"/></svg></b><b class="t"><svg><use href="#zoomout"/></svg></b><b class="t"><svg><use href="#zoomfull"/></svg></b><b class="t"><svg><use href="#zoomsel"/></svg></b><b class="t"><svg><use href="#zoomlayer"/></svg></b><b class="t off"><svg><use href="#zoomnative"/></svg></b><b class="t"><svg><use href="#zoomlast"/></svg></b><b class="t off"><svg><use href="#zoomnext"/></svg></b><b class="t"><svg><use href="#mapview"/></svg></b><b class="t"><svg><use href="#bookmark"/></svg></b><b class="t"><svg><use href="#bookmarks"/></svg></b><b class="t"><svg><use href="#refresh"/></svg></b>
  <i class="grip"></i>
  <b class="t"><svg><use href="#identify"/></svg></b><b class="t off"><svg><use href="#action"/></svg></b><i class="drop off"></i><b class="t"><svg><use href="#select"/></svg></b><i class="drop"></i><b class="t"><svg><use href="#selval"/></svg></b><i class="drop"></i><b class="t"><svg><use href="#desel"/></svg></b><b class="t"><svg><use href="#table"/></svg></b><b class="t"><svg><use href="#abacus"/></svg></b><b class="t"><svg><use href="#gear"/></svg></b><b class="t"><svg><use href="#sigma"/></svg></b><b class="t"><svg><use href="#measure"/></svg></b><i class="drop"></i><b class="t"><svg><use href="#tips"/></svg></b><b class="t"><svg><use href="#textann"/></svg></b><i class="drop"></i>
</div>
<div class="bar second">
  <i class="grip first"></i>
  <b class="t"><svg><use href="#dsm"/></svg></b><b class="t"><svg><use href="#newgpkg"/></svg></b><b class="t"><svg><use href="#newshp"/></svg></b><b class="t"><svg><use href="#newlite"/></svg></b><b class="t"><svg><use href="#mem"/></svg></b><i class="sep"></i><b class="t"><svg><use href="#newvirt"/></svg></b>
  <i class="grip"></i>
  <b class="t off corner"><svg><use href="#pencils"/></svg></b><b class="t"><svg><use href="#pencil"/></svg></b><b class="t off"><svg><use href="#savee"/></svg></b><b class="t off"><svg><use href="#digit"/></svg></b><b class="t off"><svg><use href="#vertex"/></svg></b><i class="drop off"></i><b class="t off"><svg><use href="#multi"/></svg></b><b class="t off"><svg><use href="#trash"/></svg></b><b class="t off"><svg><use href="#cut"/></svg></b><b class="t off"><svg><use href="#copy"/></svg></b><b class="t off"><svg><use href="#paste"/></svg></b><b class="t off"><svg class="mid"><use href="#undo"/></svg></b><b class="t off"><svg class="mid"><use href="#redo"/></svg></b>
  <i class="grip"></i>
  <b class="t"><svg><use href="#label"/></svg></b><b class="t"><svg><use href="#diag"/></svg></b><i class="sep"></i><b class="t"><svg><use href="#labelb"/></svg></b><b class="t"><svg><use href="#labelr"/></svg></b><i class="sep"></i><b class="t off"><svg><use href="#l-pin"/></svg></b><b class="t off"><svg><use href="#l-eye"/></svg></b><b class="t off"><svg><use href="#l-move"/></svg></b><b class="t off"><svg><use href="#l-rot"/></svg></b><b class="t off"><svg><use href="#l-edit"/></svg></b>
  <i class="grip"></i>
  <b class="t"><svg><use href="#wadd"/></svg></b><b class="t on"><svg><use href="#wsearch"/></svg></b>
  <i class="grip"></i>
  <b class="t"><svg><use href="#python"/></svg></b><b class="t"><svg><use href="#earth"/></svg></b><b class="t"><svg><use href="#greenmap"/></svg></b>
  <i class="grip"></i>
  <b class="t"><svg><use href="#help"/></svg></b>
  <i class="grip"></i>
  <b class="t"><svg><use href="#polyc"/></svg></b><b class="t"><svg><use href="#tabref"/></svg></b>
</div>
<div class="bar third">
  <i class="grip first"></i>
  <b class="t"><svg><use href="#chart"/></svg></b>
  <i class="grip"></i>
  <b class="t"><svg><use href="#qms"/></svg></b><b class="t"><svg><use href="#osm"/></svg></b>
  <i class="grip"></i><i class="grip"></i>
  <b class="t"><svg><use href="#searchpin"/></svg></b>
  <div class="combo country"><span>Ghana</span><i class="tri"></i></div>
  <div class="field finder">Search for...</div>
</div>

<main class="work">
  <aside class="side">
    <i class="hgrip"></i>
    <div><svg><use href="#addvec"/></svg></div>
    <div><svg><use href="#addras"/></svg></div>
    <div><svg><use href="#addmesh"/></svg></div>
    <div><svg><use href="#adddelim"/></svg></div>
    <div><svg><use href="#addlite"/></svg></div>
    <div><svg><use href="#addvirt"/></svg></div>
    <div><svg><use href="#addpg"/></svg><i class="tri"></i></div>
    <div><svg><use href="#addwms"/></svg><i class="tri"></i></div>
    <div><svg><use href="#addxyz"/></svg></div>
    <div><svg><use href="#addwfs"/></svg><i class="tri"></i></div>
    <div><svg><use href="#newgpkg"/></svg><i class="tri"></i></div>
  </aside>

  <section class="left">
    <div class="dt"><span>Browser</span><svg><use href="#float"/></svg><svg><use href="#closep"/></svg></div>
    <div class="tools bt"><svg><use href="#s-add"/></svg><svg><use href="#refresh"/></svg><svg><use href="#s-filter"/></svg><svg><use href="#s-up"/></svg><svg viewBox="0 0 18 18"><use href="#info" width="24" height="24"/></svg></div>
    <div class="browser">
      <div class="rows">
        <div class="row"><i class="exp none"></i><svg><use href="#star"/></svg><span>Favorites</span></div>
        <div class="row"><i class="exp"></i><svg><use href="#bookmarks"/></svg><span>Spatial Bookmarks</span></div>
        <div class="row"><i class="exp"></i><svg><use href="#gpkg"/></svg><span>GeoPackage</span></div>
      </div>
      <div class="vs"><b><i class="tri up"></i></b><em></em><b><i class="tri"></i></b></div>
      <div class="hs"><b><i class="tri lf"></i></b><em></em><s></s><b><i class="tri rt"></i></b></div>
      <div class="cnr"></div>
    </div>
    <div class="split"><i></i></div>
    <div class="dt"><span>Layers</span><svg><use href="#float"/></svg><svg><use href="#closep"/></svg></div>
    <div class="tools lt"><b class="on"><svg><use href="#s-brush"/></svg></b><svg><use href="#s-group"/></svg><svg><use href="#s-eye"/></svg><svg><use href="#s-filter"/></svg><svg><use href="#s-eps"/></svg><i class="tri"></i><svg><use href="#s-down"/></svg><svg><use href="#s-up"/></svg><svg><use href="#s-rem"/></svg></div>
    <div class="layers">
      <div class="lrow"><i class="exp"></i><i class="chk"><svg viewBox="0 0 10 10"><path d="M1.500 5l2.200 3.200L8.500 1.500" fill="none" stroke="#000" stroke-width="1.800"/></svg></i><svg class="sym"><use href="#poly"/></svg><strong>Divided Polygon divider1</strong></div>
      <div class="lrow cur"><i class="exp none"></i><i class="chk"><svg viewBox="0 0 10 10"><path d="M1.500 5l2.200 3.200L8.500 1.500" fill="none" stroke="#000" stroke-width="1.800"/></svg></i><i class="sw"></i><strong><u>ashanti_admin_boundary</u></strong></div>
    </div>
  </section>

  <section class="canvas">
    <svg class="map" viewBox="370 161 623 538">
      <defs>
        <path id="border" transform="translate(370 180) scale(.33333)" d="M295 213L303 203 306 192 315 181 318 164 330 169 352 171 374 171 385 178 393 199 415 201 434 209 446 204 453 192 466 183 488 192 505 175 513 166 515 155 521 166 530 167 539 160 538 185 536 197 548 226 563 259 590 260 601 278 613 280 626 287 645 281 667 281 679 280 688 286 697 270 711 264 730 243 742 219 752 213 777 218 791 219 796 224 798 208 802 200 801 186 795 178 809 161 821 153 825 147 832 142 835 130 843 118 845 112 853 106 856 97 863 88 865 77 876 72 880 67 887 66 893 57 904 56 908 51 914 52 921 49 929 45 943 39 955 38 964 39 959 48 961 72 968 77 973 86 974 98 977 106 988 113 996 121 1007 130 1018 145 1030 143 1055 142 1068 150 1085 155 1090 163 1101 158 1113 158 1130 163 1136 155 1142 153 1146 146 1156 144 1159 136 1165 130 1168 123 1177 118 1182 111 1190 109 1203 113 1215 112 1227 109 1234 119 1240 118 1250 121 1260 129 1271 133 1285 131 1295 131 1298 127 1308 124 1320 125 1325 121 1334 121 1345 131 1350 127 1357 129 1359 136 1366 130 1371 136 1382 139 1390 135 1400 134 1410 130 1415 124 1422 120 1437 121 1450 116 1460 106 1468 115 1475 118 1482 126 1495 141 1494 163 1491 190 1496 194 1502 203 1505 216 1512 224 1515 230 1521 236 1528 249 1538 260 1555 257 1565 258 1578 254 1592 262 1622 265 1655 272 1675 278 1690 285 1705 290 1727 290 1736 302 1743 302 1750 306 1756 312 1762 314 1770 310 1777 315 1785 311 1792 314 1802 322 1810 335 1810 345 1813 354 1820 363 1820 370 1822 378 1812 384 1800 386 1788 386 1782 392 1774 398 1771 408 1765 415 1760 423 1750 429 1735 436 1720 442 1706 445 1690 442 1675 440 1665 438 1655 441 1646 440 1630 440 1612 437 1600 434 1585 430 1565 430 1545 422 1527 418 1520 409 1513 402 1505 403 1511 415 1517 430 1523 455 1530 475 1538 490 1543 505 1553 514 1562 523 1560 542 1554 556 1554 572 1550 577 1542 580 1525 578 1508 579 1490 583 1488 594 1470 589 1455 586 1445 580 1435 578 1425 583 1417 586 1409 597 1410 625 1409 660 1395 685 1381 709 1372 707 1362 710 1345 709 1337 718 1325 717 1315 719 1302 718 1292 712 1285 722 1278 728 1265 737 1245 741 1230 743 1226 748 1240 751 1246 744 1249 752 1255 762 1250 778 1240 788 1232 800 1230 820 1232 851 1242 846 1253 844 1258 831 1275 832 1278 843 1284 855 1281 870 1270 877 1265 884 1255 892 1250 900 1244 910 1240 918 1232 923 1222 928 1215 939 1209 948 1207 958 1207 973 1202 980 1206 990 1200 1000 1200 1017 1192 1013 1182 1016 1175 1024 1165 1027 1160 1033 1145 1043 1138 1053 1123 1062 1123 1074 1117 1086 1108 1093 1109 1100 1104 1106 1108 1120 1114 1130 1112 1142 1112 1175 1108 1183 1100 1186 1080 1186 1060 1184 1058 1192 1066 1198 1066 1210 1062 1228 1052 1234 1051 1240 1056 1247 1050 1258 1059 1268 1050 1273 1050 1280 1042 1292 1042 1303 1036 1308 1034 1316 1028 1320 1026 1332 1018 1345 1016 1354 1020 1360 1033 1366 1036 1380 1034 1396 1025 1397 1020 1403 1012 1403 1010 1411 1003 1414 1003 1424 998 1431 992 1425 985 1427 980 1436 972 1438 963 1426 966 1415 963 1408 957 1411 950 1418 946 1410 936 1412 930 1404 920 1402 911 1404 905 1412 893 1414 888 1410 880 1410 875 1421 865 1420 860 1425 850 1422 846 1430 837 1428 841 1438 840 1450 833 1451 828 1461 820 1453 811 1453 808 1446 793 1446 796 1436 806 1434 806 1420 800 1415 797 1407 790 1407 785 1395 778 1396 773 1403 765 1408 758 1402 752 1403 742 1410 738 1401 730 1403 718 1407 710 1402 700 1404 690 1406 682 1409 672 1413 665 1402 655 1395 648 1403 640 1400 638 1384 628 1380 620 1372 612 1376 605 1373 598 1377 590 1376 585 1360 574 1354 568 1345 558 1340 557 1332 562 1325 557 1320 550 1322 545 1318 530 1322 528 1331 520 1336 508 1334 506 1324 500 1320 494 1324 491 1333 487 1336 470 1333 464 1325 457 1315 447 1303 430 1301 426 1282 428 1270 422 1256 416 1262 420 1253 415 1248 408 1251 400 1255 391 1248 391 1242 387 1238 386 1206 380 1202 380 1193 373 1185 379 1178 381 1170 387 1165 388 1145 392 1135 397 1125 395 1111 382 1113 372 1116 352 1108 340 1106 325 1097 315 1097 306 1100 302 1085 303 1075 296 1068 285 1065 278 1057 265 1051 252 1056 240 1063 230 1073 224 1085 228 1070 231 1060 229 1035 224 1015 221 995 217 975 208 960 195 951 175 954 160 950 150 953 135 950 118 958 123 966 122 975 127 985 125 1005 120 1025 110 1040 95 1065 90 1074 84 1064 70 1066 60 1063 60 1040 62 1015 50 1003 47 988 50 975 60 970 63 963 66 950 80 937 87 928 98 915 95 898 101 888 98 878 103 868 95 855 88 845 80 833 85 822 70 816 85 808 105 802 113 790 127 782 140 786 160 790 167 780 175 775 176 766 183 758 185 735 190 718 197 705 180 703 165 700 160 692 157 698 148 699 133 695 130 685 137 680 133 672 120 664 103 669 82 685 70 678 73 670 80 665 88 655 92 655 95 640 104 631 112 628 118 620 130 612 134 602 140 598 158 586 172 585 205 556 208 546 215 540 222 534 232 530 240 518 257 512 260 524 272 514 292 507 300 525 313 537 325 536 330 527 345 514 358 508 380 506 392 490 405 480 420 474 435 468 446 468 461 435 461 398 485 387 513 376 525 357 546 335 535 319 520 316 510 322 500 325 480 335 470 327 446 328 436 303 418 298 412 291 402 283 385 288 370 293 360 285 345 279 315 243z"/>
        <clipPath id="region"><use href="#border"/></clipPath>
      </defs>
      <g clip-path="url(#region)" stroke="#222" stroke-width="1.100">
        <path fill="#a37fe6" d="M630 185h105v47.500h-105z"/><path fill="#7ad8b9" d="M735 185h140v47.500h-140z"/>
        <path fill="#e0ab80" d="M460 225h126.500v52.300h-126.500z"/><path fill="#ebec4b" d="M586.500 232.500h99.800v44.800h-99.800z"/><path fill="#de936e" d="M686.300 232.500h66.200v44.800h-66.200z"/><path fill="#78e5b9" d="M752.500 232.500h66v44.800h-66z"/><path fill="#c728d9" d="M818.500 232.500h130v44.800h-130z"/>
        <path fill="#9a4ad6" d="M500 277.300h92.800v47.200h-92.800z"/><path fill="#d61c1c" d="M592.800 277.300h62.200v47.200h-62.200z"/><path fill="#ca2b5f" d="M655 277.300h61.800v47.200h-61.800z"/><path fill="#4a77db" d="M716.800 277.300h61.800v47.200h-61.800z"/><path fill="#15b8d2" d="M778.600 277.300h62v47.200h-62z"/><path fill="#1f9fca" d="M840.600 277.300h64.400v47.200h-64.400z"/><path fill="#cfa54b" d="M905 277.300h80v60h-80z"/>
        <path fill="#4545cf" d="M420 324.500h116v50.800h-116z"/><path fill="#ad72cb" d="M536 324.500h58v50.800h-58z"/><path fill="#4dd04e" d="M594 324.500h58v50.800h-58z"/><path fill="#a0e81d" d="M652 324.500h57.800v50.800h-57.800z"/><path fill="#69d35f" d="M709.800 324.500h58v50.800h-58z"/><path fill="#1fcab9" d="M767.800 324.500h58v50.800h-58z"/><path fill="#d22a16" d="M825.800 324.500h70v60h-70z"/>
        <path fill="#eddb8c" d="M385 375.300h83.300v57.700h-83.300z"/><path fill="#d35cd3" d="M468.300 375.300h50.700v57.700h-50.700z"/><path fill="#83c92f" d="M519 375.300h51.300v57.700h-51.300z"/><path fill="#7781d2" d="M570.300 375.300h51v57.700h-51z"/><path fill="#e76f4b" d="M621.300 375.300h51.100v57.700h-51.100z"/><path fill="#50d728" d="M672.400 375.300h51.200v57.700h-51.200z"/><path fill="#69dcdf" d="M723.600 375.300h50.900v57.700h-50.900z"/><path fill="#b5d83f" d="M774.500 375.300h67.500v57.700h-67.500z"/>
        <path fill="#31d67c" d="M385 433h75.500v54h-75.500z"/><path fill="#ebdd5a" d="M460.500 433h54.500v54h-54.500z"/><path fill="#7eb4d2" d="M515 433h54.500v54h-54.500z"/><path fill="#c7d566" d="M569.500 433h54v54h-54z"/><path fill="#5fdb7d" d="M623.500 433h54.500v54h-54.500z"/><path fill="#e24658" d="M678 433h54.500v54h-54.500z"/><path fill="#8373ec" d="M732.500 433h70v54h-70z"/>
        <path fill="#2b50d0" d="M380 487h136v22.800h-80v40h-56z"/><path fill="#dd5772" d="M516 487h129.200v22.800h-129.200z"/><path fill="#d63aa3" d="M645.200 487h140v22.800h-140z"/>
        <path fill="#bb37e1" d="M436 509.800h86.700v51.200h-86.700z"/><path fill="#46e955" d="M522.700 509.800h57v51.200h-57z"/><path fill="#eb992e" d="M579.700 509.800h56.500v51.200h-56.500z"/><path fill="#1fda60" d="M636.200 509.800h57v51.200h-57z"/><path fill="#e488cf" d="M693.200 509.800h90v51.200h-90z"/>
        <path fill="#2577e3" d="M480 561h78.300v52.400h-78.300z"/><path fill="#8bca5a" d="M558.300 561h56.200v52.400h-56.200z"/><path fill="#188bee" d="M614.500 561h56.200v52.400h-56.200z"/><path fill="#cf5e8d" d="M670.700 561h80v52.400h-80z"/>
        <path fill="#d464a2" d="M500 613.400h140v60h-140z"/><path fill="#4218d0" d="M640 613.400h90v60h-90z"/>
      </g>
      <use href="#border" fill="none" stroke="#222" stroke-width="3"/>
    </svg>
  </section>
  <div class="vsplit"><i></i></div>

  <section class="right">
    <div class="dt"><span>Layer Styling</span><svg><use href="#float"/></svg><svg><use href="#closep"/></svg></div>
    <div class="combo layer"><svg><use href="#poly"/></svg><span>ashanti_admin_boundary</span><i class="tri"></i></div>
    <div class="style">
      <div class="tabs">
        <b class="act"><svg><use href="#brush"/></svg></b><b><svg><use href="#label"/></svg></b><b><svg><use href="#cube"/></svg></b><b><svg><use href="#brushes"/></svg></b><b><svg><use href="#history"/></svg></b>
      </div>
      <div class="body">
        <div class="scroll">
          <div class="view">
            <div class="prev"><i class="big"></i><i class="list"></i><b><svg viewBox="0 0 16 16"><path d="M2 1v12h12V5H9V1" fill="#fff" stroke="#888"/><path d="M9.500 8.500h5v5h-5z" fill="#e6d78a" stroke="#999"/></svg></b><b><svg viewBox="0 0 16 16"><path d="M3 7h10v7H3z" fill="#c4b98f"/><path d="M8 7V3h4" stroke="#aaa" stroke-width="2" fill="none"/></svg></b></div>
            <div class="props">
              <div class="form">
                <label>Unit</label><div class="combo"><span>Millimeters</span><i class="tri"></i></div>
                <label class="oplab">Opacity</label><div class="op"><div class="slider"><i></i></div><div class="spin">100.0 %<em><i class="tri up"></i><i class="tri"></i></em></div></div>
                <label>Color</label><div class="col"><div class="cbtn"><i></i></div><div class="cdrop"><i class="tri"></i></div></div>
              </div>
              <div class="vs in"><b><i class="tri up"></i></b><em></em><s></s><b><i class="tri"></i></b></div>
            </div>
          </div>
          <div class="vs out"><b><i class="tri up"></i></b><s class="a"></s><em></em><s></s><b><i class="tri"></i></b></div>
        </div>
        <div class="acts"><b class="btn"><svg><use href="#undo"/></svg></b><b class="btn"><svg><use href="#redo"/></svg></b><i class="chk"><svg viewBox="0 0 10 10"><path d="M1.500 5l2.200 3.200L8.500 1.500" fill="none" stroke="#000" stroke-width="1.800"/></svg></i><span>Live update</span><div class="btn apply">Apply</div></div>
      </div>
    </div>
    <div class="dtabs"><span class="sel">Layer Styling</span><span>Processing Toolbox</span></div>
    <div class="split"><i></i></div>
    <div class="dt"><span class="sq">Search QMS</span><svg><use href="#float"/></svg><svg><use href="#closep"/></svg></div>
    <div class="field qs">Search string...</div>
    <div class="filt"><div class="btn">Filter by extent</div><div class="combo"><span>All</span><i class="tri"></i></div></div>
    <div class="res">
      <div class="last">Last used:</div>
      <div class="item alt">
        <svg viewBox="0 0 24 24"><path d="M1 2h19v21H1z" fill="#1e9e5a"/><path d="M1 23L20 4v19z" fill="#e6e6e6"/><path d="M4 23l8.500-8.500L22 23z" fill="#4486f4"/><path d="M1 18L15 4l3 3L2 23H1z" fill="#fbd444"/><text x="2.500" y="11" class="i-g">G</text><path d="M19 18c-1-5-6-7-6-12a5.500 5.500 0 0 1 11 0c0 5-4 7-5 12z" fill="#e0453a"/><circle cx="18.500" cy="6" r="2" fill="#7c1d17"/></svg>
        <div class="tx"><strong>Google Maps</strong><p>TMS <u>details</u>, <u>report a problem</u></p></div><i class="dot"></i><div class="btn">Add</div>
      </div>
      <div class="item">
        <svg viewBox="0 0 24 24"><path d="M.7 2l7.300 2 8-3 7.300 2v19l-7.300-2-8 3-7.300-2z" fill="#f2f8fd" stroke="#2b7ab8" stroke-width="1.100"/><path d="M8 4v18M16 1v19M1 9c5 0 5 9 7 11M3 2c0 6 7 5 10 13M8 13c5-2 8-5 8-11M8 19c7-3 10-7 15-8M11 20c5-2 7-5 12-4M1 14l5 8M12 3c1 4 5 4 11 3" fill="none" stroke="#2b7ab8" stroke-width=".8"/></svg>
        <div class="tx"><strong>Google Satellite</strong><p>TMS <u>details</u>, <u>report a problem</u></p></div><i class="dot"></i><div class="btn">Add</div>
      </div>
    </div>
  </section>
</main>

<footer class="status">
  <div class="field loc"><svg viewBox="0 0 14 14"><circle cx="6" cy="5.500" r="4" fill="none" stroke="#777" stroke-width="1.200"/><path d="M8.800 8.500l4 4.500" stroke="#777" stroke-width="1.600"/></svg>Type to locate (Ctrl+K)</div>
  <span class="rdy">Ready</span>
  <div class="prog">2%</div>
  <span class="co">Coordinate</span><div class="field cf">1161765,432598</div>
  <svg class="mouse" viewBox="0 0 16 16"><path d="M2 3l4-2 8 9c2 4-3 6-5 4z" fill="#ddd" stroke="#333"/><path d="M1 6l8-5M3 9l8-5M9 3l6-2M11 6l4-3M6 9l4-3" stroke="#333" stroke-width="1.300"/></svg>
  <span class="sc">Scale</span><div class="spin sf">1:1442169<em><i class="tri"></i></em></div>
  <svg class="lock" viewBox="0 0 12 16"><path d="M3 8V4.500C3 .5 9 .5 9 4.500V8" fill="none" stroke="#777" stroke-width="1.800"/><rect x=".5" y="7" width="11" height="8" rx="1" fill="#555"/></svg>
  <span class="mg">Magnifier</span><div class="spin mf">100%<em><i class="tri up"></i><i class="tri"></i></em></div>
  <span class="ro">Rotation</span><div class="spin rf">0.0 °<em><i class="tri up"></i><i class="tri"></i></em></div>
  <i class="chk"><svg viewBox="0 0 10 10"><path d="M1.500 5l2.200 3.200L8.500 1.500" fill="none" stroke="#000" stroke-width="1.800"/></svg></i><span class="rn">Render</span>
  <svg class="crs" viewBox="0 0 16 16"><path d="M8 1l5 3 2 4-2 4-5 3-5-3-2-4 2-4z" fill="#999" stroke="#666"/><path d="M1 8h14M8 1v14M4 4v8M12 4v8M3 5h10M3 11h10" stroke="#ddd" stroke-width=".8"/></svg>
  <span class="ep">EPSG:2136</span>
  <svg class="msg" viewBox="0 0 16 16"><path d="M8 1c10 0 10 11 2 11l-1 3-3-3c-8-1-8-11 2-11z" fill="#555"/><path d="M4 6.500h2M7 6.500h2M10 6.500h2" stroke="#fff" stroke-width="1.700"/></svg>
</footer>
</div>
</body>
</html>
```
FILE: styles.css
```css
* { box-sizing: border-box; }
body { margin: 0; background: #efefef; }
.defs { position: absolute; width: 0; height: 0; }
.app { width: 1365px; height: 728px; overflow: hidden; display: flex; flex-direction: column; font: 11px/14px "Noto Sans", "Open Sans", sans-serif; letter-spacing: -0.100px; color: #000; white-space: nowrap; }
i, em { font-style: normal; }
svg { display: block; flex: none; }

.i-a { font: 12px "Noto Sans", sans-serif; fill: #444; }
.i-11 { font: bold 8.500px "Noto Sans", sans-serif; fill: #333; letter-spacing: 0; }
.i-i { font: italic bold 15px "Liberation Serif", serif; fill: #fff; }
.i-abc { font: bold 8.500px "DejaVu Sans", sans-serif; fill: #333; letter-spacing: -0.500px; }
.i-red { fill: #e01010; }
.i-q { font: bold 16px "Liberation Serif", serif; fill: #fff; }
.i-eps { font: 17px "Liberation Serif", serif; fill: #7a4a7a; }
.i-g { font: bold 8px "Noto Sans", sans-serif; fill: #fff; }

.title { height: 23px; flex: none; background: #fff; display: flex; align-items: center; padding-left: 2px; color: #8c8c8c; }
.logo { width: 16px; height: 16px; margin-right: 5px; }
.cap { font-size: 12px; letter-spacing: -0.380px; flex: 1; }
.win { display: flex; gap: 35px; padding: 0 18px 3px 0; }
.win svg { width: 11px; height: 11px; }
.menu { height: 20px; flex: none; display: grid; grid-template-columns: 50px 35px 39px 42px 56px 53px 47px 46px 62px 38px 43px 71px auto; justify-content: start; padding-left: 10px; border-bottom: 1px solid #cfcfcf; font-size: 12px; line-height: 19px; letter-spacing: -0.350px; color: #949494; }
.menu u { text-underline-offset: 2px; }

.bar { height: 39px; flex: none; display: flex; align-items: center; background: linear-gradient(#fafafa, #efefef); border-bottom: 1px solid #b4b4b4; }
.bar.third { height: 38px; }
.t { width: 33px; height: 31px; display: flex; align-items: center; justify-content: center; flex: none; position: relative; }
.t svg { width: 24px; height: 24px; }
.t svg.mid { width: 20px; height: 20px; }
.t.off svg { opacity: .28; filter: grayscale(.8); }
.t.on { background: linear-gradient(90deg, transparent 1px, #dcdcdc 1px 32px, transparent 32px); }
.t.on::before { content: ""; position: absolute; inset: 0 1px; border: 1px solid #b2b2b2; border-radius: 3px; }
.t.on svg { position: relative; }
.t.corner::after { content: ""; position: absolute; right: 4px; bottom: 2px; border: 3px solid transparent; border-top-color: #aaa; border-bottom: 0; }
.grip { width: 16.500px; height: 17px; flex: none; background: radial-gradient(circle at 1px 1px, #c6c6c6 .5px, transparent .9px) 8px 0 / 2.500px 2.700px; clip-path: inset(0 2px 0 8px); }
.grip.first { width: 12.500px; background-position: 5px 0; clip-path: inset(0 1px 0 5px); }
.second .grip { width: 16px; }
.second .grip.first { width: 12.500px; }
.sep { width: 7px; height: 19px; flex: none; background: linear-gradient(#ccc, #ccc) 3px 0 / 1px 100% no-repeat; }
.tri { display: block; flex: none; width: 0; height: 0; border: 4px solid transparent; border-top-color: #555; border-bottom: 0; }
.tri.up { border: 4px solid transparent; border-bottom-color: #555; border-top: 0; }
.tri.lf { border: 4px solid transparent; border-right-color: #555; border-left: 0; }
.tri.rt { border: 4px solid transparent; border-left-color: #555; border-right: 0; }
.drop { width: 12px; height: 4px; flex: none; background: #555; clip-path: polygon(1px 0, 9px 0, 5px 100%); }
.drop.off { background: #aaa; }
.combo, .btn, .field, .spin, .cbtn, .cdrop { border: 1px solid #adadad; border-radius: 3px; display: flex; align-items: center; flex: none; }
.combo, .btn, .cbtn, .cdrop { background: linear-gradient(#fff, #efefef); }
.combo span { flex: 1; }
.btn { justify-content: center; }
.field, .spin { background: #fff; }
.country { width: 81px; height: 22px; padding: 0 6px 0 4px; margin-left: 1px; }
.finder { width: 768px; height: 22px; margin-left: 1px; padding-left: 2px; color: #777; letter-spacing: .250px; }

.work { height: 541px; flex: none; display: flex; align-items: flex-start; }
.side { width: 52px; height: 541px; flex: none; background: linear-gradient(90deg, #fafafa, #efefef); border-right: 1px solid #b8b8b8; padding-top: 6px; }
.side > div { height: 32.100px; display: flex; align-items: center; gap: 6px; padding-left: 8px; }
.side svg { width: 24px; height: 24px; }
.hgrip { display: block; width: 17px; height: 5px; margin: 0 0 1px 18px; background: radial-gradient(circle at 1px 1px, #c6c6c6 .5px, transparent .9px) 0 0 / 2.700px 2.500px; }

.left { width: 311px; height: 541px; flex: none; display: flex; flex-direction: column; padding-top: 1px; }
.dt { height: 20px; flex: none; display: flex; align-items: center; gap: 2px; padding: 0 2px 0 4px; }
.dt span { flex: 1; }
.dt .sq { letter-spacing: .200px; }
.dt svg { width: 12px; height: 12px; }
.tools { display: flex; align-items: center; flex: none; }
.tools svg { width: 16px; height: 16px; }
.bt { height: 30px; gap: 9px; padding: 0 0 2px 8px; }
.browser { height: 70px; flex: none; border: 1px solid #b4b4b4; background: #fff; display: grid; grid-template: 55px 13px / 295px 14px; }
.rows { overflow: hidden; }
.row { height: 18px; display: flex; align-items: center; letter-spacing: 0; }
.row svg { width: 16px; height: 16px; margin-right: 6px; }
.exp { width: 4px; height: 8px; margin: 0 11px 0 8px; background: #555; clip-path: polygon(0 0, 100% 50%, 0 100%); flex: none; }
.exp.none { background: none; }
.vs { display: flex; flex-direction: column; background: #e2e2e2; border-left: 1px solid #b4b4b4; }
.vs b, .hs b { background: linear-gradient(90deg, #fff, #efefef); display: flex; align-items: center; justify-content: center; flex: none; }
.vs b { height: 13px; }
.vs em { flex: 1; background: linear-gradient(90deg, #fff, #f2f2f2); border: solid #b4b4b4; border-width: 1px 0; }
.vs s { background: #e2e2e2; }
.hs { display: flex; border-top: 1px solid #b4b4b4; background: #e2e2e2; }
.hs b { width: 14px; background: #fbfbfb; }
.hs em { flex: 1; border: solid #b4b4b4; border-width: 0 1px; background: linear-gradient(#fff, #efefef); }
.hs s { width: 8px; border-right: 1px solid #b4b4b4; }
.cnr { border: solid #b4b4b4; border-width: 1px 0 0 1px; background: #efefef; }
.split { height: 6px; flex: none; display: flex; justify-content: center; padding-top: 1px; }
.split i { width: 18px; height: 2px; background: radial-gradient(circle at 1px 1px, #b4b4b4 .5px, transparent .9px) 0 0 / 3px 3px; }
.lt { height: 30px; padding: 0 0 2px 4px; }
.lt b.on { width: 24px; height: 24px; margin-right: 5px; border: 1px solid #b2b2b2; border-radius: 3px; background: #dcdcdc; display: flex; align-items: center; justify-content: center; }
.lt > svg { margin-right: 9px; }
.lt .tri { margin: 0 7px 0 -3px; }
.lt .tri + svg { margin-left: 1px; }
.layers { flex: 1; background: #fff; border: 1px solid #b4b4b4; }
.lrow { height: 18.500px; display: flex; align-items: center; letter-spacing: .150px; }
.lrow.cur { background: #efefef; letter-spacing: -0.120px; }
.lrow u { text-underline-offset: 1px; }
.chk { width: 14px; height: 14px; border: 1px solid #b0b0b0; background: #fff; display: flex; align-items: center; justify-content: center; flex: none; }
.chk svg { width: 10px; height: 10px; }
.sym { width: 16px; height: 16px; margin: 0 6px 0 6px; }
.sw { width: 16px; height: 16px; background: #6562ab; border: 1px solid #3d5e8e; margin: 0 6px; }

.canvas { width: 625px; height: 540px; margin: 1px 0 0 6px; flex: none; border: 1px solid #a8a8a8; background: #fff; }
.map { width: 623px; height: 538px; }
.vsplit { width: 6px; align-self: center; padding: 8px 0 0 2px; }
.vsplit i { display: block; width: 2px; height: 18px; background: radial-gradient(circle at 1px 1px, #b4b4b4 .5px, transparent .9px) 0 0 / 3px 3px; }

.right { width: 365px; height: 541px; flex: none; overflow: hidden; padding-top: 1px; display: flex; flex-direction: column; }
.right .dt { padding: 0 0 0 4px; }
.combo.layer { width: 360px; height: 24px; margin: 3px 0 5px 3px; padding: 0 7px 0 5px; letter-spacing: -0.450px; }
.layer svg { width: 16px; height: 16px; margin-right: 3px; }
.style { height: 191px; flex: none; display: flex; padding-left: 3px; }
.tabs { width: 38px; flex: none; background: #5b5b5b; }
.tabs b { height: 32px; display: flex; align-items: center; justify-content: center; padding-right: 8px; }
.tabs .act { background: #efefef; padding-right: 2px; }
.tabs svg { width: 22px; height: 22px; }
.body { flex: 1; display: flex; flex-direction: column; padding-left: 3px; }
.scroll { height: 162px; display: flex; }
.view { width: 305px; height: 153px; }
.prev { height: 76px; display: flex; align-items: flex-start; padding-left: 20px; border-bottom: 1px solid #a0a0a0; }
.big { width: 61px; height: 32px; border: 1px solid #222; border-top: 0; background: #8c5a99; }
.list { width: 131px; height: 69px; margin: 0 6px 0 25px; border: 1px solid #b4b4b4; border-top: 0; background: #fff; }
.prev b { width: 28px; height: 16px; overflow: hidden; border: 1px solid #b8b8b8; border-top: 0; border-radius: 0 0 3px 3px; margin-right: 6px; display: flex; align-items: flex-end; justify-content: center; flex: none; padding-bottom: 3px; }
.prev b svg { width: 16px; height: 16px; opacity: .5; }
.prev b + b { border-right: 0; margin: 0; border-radius: 0; }
.props { display: flex; height: 77px; padding-top: 8px; }
.form { width: 292px; display: grid; grid-template: 22px 22px 22px / 37px 245px; align-content: start; align-items: center; }
.form label { padding-top: 1px; }
.form label.oplab { margin-left: -1px; letter-spacing: -0.250px; }
.form > label + .combo { height: 22px; padding: 0 7px 0 3px; }
.op { display: flex; align-items: center; gap: 4px; }
.slider { width: 141px; height: 14px; display: flex; justify-content: flex-end; align-items: center; background: linear-gradient(#fff, #fff) 1px 6px / 100% 2px no-repeat, linear-gradient(#aaa, #aaa) 1px 5px / 100% 4px no-repeat; }
.slider i { width: 13px; height: 13px; border: 1px solid #aaa; border-radius: 3px; background: #fff; }
.spin { justify-content: space-between; padding-left: 4px; height: 20px; overflow: hidden; }
.op .spin { width: 100px; letter-spacing: .300px; }
.spin em { width: 14px; align-self: stretch; border-left: 1px solid #adadad; background: #f7f7f7; display: flex; flex-direction: column; align-items: center; justify-content: center; gap: 4px; }
.col { display: flex; }
.cbtn { width: 233px; height: 21px; padding: 0 4px; }
.cbtn i { flex: 1; height: 16px; border-radius: 3px; background: #8c5a99; }
.cdrop { width: 12px; height: 21px; justify-content: center; }
.cdrop .tri, .spin .tri { border-left-width: 3px; border-right-width: 3px; }
.vs.in { width: 14px; height: 68px; }
.vs.in s { height: 14px; }
.vs.out { width: 15px; height: 162px; }
.vs.out s { height: 10px; }
.vs.out .a { height: 47px; border-top: 1px solid #b4b4b4; }
.acts { display: flex; align-items: center; padding: 6px 3px 0 0; }
.acts b { width: 24px; height: 23px; margin-right: 6px; }
.acts b svg { width: 15px; height: 15px; }
.acts .chk { margin: 0 4px 0 92px; }
.acts span { flex: 1; letter-spacing: -0.350px; }
.apply { width: 80px; height: 22px; }
.dtabs { height: 27px; flex: none; display: flex; align-items: flex-start; border-top: 1px solid #b4b4b4; margin-top: 3px; }
.dtabs span { height: 21px; width: 115px; border: 1px solid #b4b4b4; border-top: 0; background: #dedede; text-align: center; line-height: 21px; letter-spacing: -0.300px; }
.dtabs .sel { height: 23px; width: 87px; background: #f4f4f4; line-height: 25px; margin-top: -1px; letter-spacing: -0.200px; }
.right .split { height: 6px; margin-top: -2px; padding-top: 0; }
.qs { width: 375px; height: 22px; padding-left: 2px; color: #777; }
.filt { height: 33px; display: flex; gap: 6px; padding: 5px 0 0 206px; }
.filt .btn { width: 82px; height: 22px; }
.filt .combo { width: 82px; height: 22px; padding: 0 15px 0 4px; }
.res { height: 184px; width: 375px; border: 1px solid #b4b4b4; background: #fff; }
.last { height: 16px; padding-left: 3px; line-height: 16px; }
.item { height: 56px; display: flex; align-items: center; padding-left: 5px; }
.item.alt { background: #e8e7e4; }
.item > svg { width: 24px; height: 24px; margin-right: 6px; }
.tx { width: 273px; line-height: 18px; letter-spacing: .120px; }
.tx p { margin: 0; letter-spacing: -0.420px; }
.tx p u { color: #00e; }
.dot { width: 11px; height: 11px; border-radius: 50%; background: #008000; margin-right: 7px; margin-top: 3px; }
.item .btn { width: 33px; height: 20px; }

.status { height: 28px; flex: none; display: grid; grid-template-columns: 200px 6px 164px 3px 170px 13px 57px 103px 5px 20px 8px 29px 80px 13px 12px 8px 48px 88px 8px 51px 83px 7px 14px 4px 54px 15px 3px 66px 7px 16px; align-items: center; padding-left: 4px; }
.status .field, .status .spin { height: 22px; }
.status > span { padding-top: 1px; }
.loc { grid-column: 1; padding-left: 7px; color: #777; }
.loc svg { width: 14px; height: 14px; margin-right: 6px; }
.rdy { grid-column: 3; padding-left: 1px; }
.prog { grid-column: 5; height: 13px; border: 1px solid #999; border-left-width: 3px; border-radius: 2px; background: #fff; display: flex; align-items: center; justify-content: center; }
.co { grid-column: 7; letter-spacing: -0.250px; }
.cf { grid-column: 8; justify-content: center; }
.mouse { grid-column: 10; width: 16px; height: 16px; }
.sc { grid-column: 12; }
.sf { grid-column: 13; letter-spacing: -0.150px; }
.sf em { width: 19px; }
.lock { grid-column: 15; width: 12px; height: 16px; }
.mg { grid-column: 17; letter-spacing: -0.450px; }
.mf { grid-column: 18; }
.ro { grid-column: 20; letter-spacing: -0.200px; }
.rf { grid-column: 21; }
.status .chk { grid-column: 23; }
.rn { grid-column: 25; letter-spacing: -0.350px; }
.crs { grid-column: 26; width: 15px; height: 15px; }
.ep { grid-column: 28; }
.msg { grid-column: 30; width: 16px; height: 16px; }
```
